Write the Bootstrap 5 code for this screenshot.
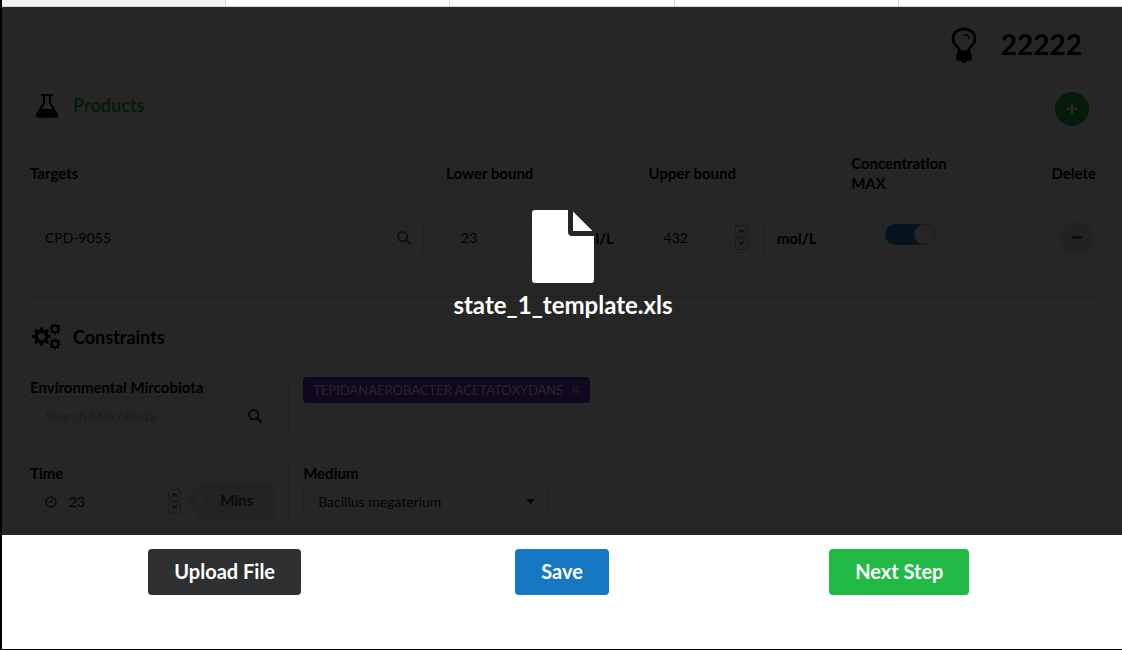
<!DOCTYPE html>
<html lang="en">
<head>
<meta charset="utf-8">
<meta name="viewport" content="width=device-width, initial-scale=1">
<title>Products and constraints</title>
<link href="https://cdn.jsdelivr.net/npm/bootstrap@5.3.0/dist/css/bootstrap.min.css" rel="stylesheet">
<style>
  body { font-family: Lato, "Liberation Sans", sans-serif; font-size: 14px; line-height: 20px; color: #000; background: #fff; }
  svg { display: block; flex: none; }
  .frame { border-left: 2px solid #000; border-bottom: 1px solid #000; }
  .steps { height: 7px; border-bottom: 1px solid #d4d4d5; }
  .steps > * { border-right: 1px solid #d4d4d5; }
  .steps > :first-child { background: #f3f4f5; }
  .steps > :last-child { border-right: 0; }
  .panel { padding: 16px 26px 14px 28px; }
  .score { font-size: 28px; line-height: 40px; font-weight: 700; gap: 24px; padding-right: 14px; }
  .section-title { font-size: 18px; line-height: 24px; font-weight: 700; margin: 0; }
  .product-head { margin: 27px 0 17px; }
  .product-head .section-title { padding-bottom: 8px; }
  .glyph-slot { width: 43px; flex: none; }
  .product-head .glyph-slot { padding-bottom: 6px; }
  .green-text { color: #21ba45; }
  .caption { font-size: 15px; font-weight: 700; line-height: 20px; }
  .round-btn { border: 0; padding: 0; border-radius: 50%; display: flex; align-items: center; justify-content: center; }
  .round-add { width: 34px; height: 34px; background: #21ba45; color: #fff; margin-right: 7px; }
  .round-del { width: 32px; height: 32px; background: #e0e1e2; color: #5a5b5c; margin-right: 3px; }
  .targets { table-layout: fixed; width: 100%; }
  .targets th { padding: 10px 11px 13px; height: 64px; vertical-align: middle; border-bottom: 1px solid #dedfdf; }
  .targets td { padding: 11px; vertical-align: middle; }
  .targets tr > :first-child { padding-left: 0; }
  .targets tr > :last-child { padding-right: 0; }
  .field { height: 38px; border: 1px solid #dedfdf; border-radius: 4px; padding: 0 12px 0 14px; gap: 12px; }
  .field input { border: 0; background: none; outline: 0; padding: 0; color: #000; min-width: 0; width: 100%; appearance: textfield; -moz-appearance: textfield; }
  .field input::-webkit-inner-spin-button { appearance: none; }
  .field input::placeholder { color: #c0c0c0; }
  .bound { width: 181px; padding-right: 0; gap: 16px; }
  .unit { width: 65px; border-left: 1px solid #dedfdf; flex: none; }
  .toggle { padding: 0; min-height: 0; margin-left: 34px; line-height: 0; padding-bottom: 4px; }
  .toggle .form-check-input { width: 50px; height: 21px; margin: 0; float: none; border: 0; background: #2185d0; position: relative; }
  .toggle .form-check-input::after { content: ""; position: absolute; right: 0; top: 0; width: 21px; height: 21px; border-radius: 50%; background: #fff; border: 1px solid #d4d4d5; }
  .side { width: 23%; flex: none; }
  .line-v { width: 1px; background: #dedfdf; margin: 0 14px 0 13px; }
  .line-h { height: 1px; background: #d4d4d5; }
  .block-gap { margin-top: 28px; }
  .constraint-head { margin: 26px 0; }
  .chip { background: #6435c9; color: #fff; border-radius: 4px; font-size: 13px; height: 26px; padding: 0 10px; gap: 8px; }
  .chip button { border: 0; background: none; padding: 0; color: #fff; opacity: .5; }
  .tag-unit { width: 90px; flex: none; height: 38px; padding: 0 0 4px 35px; background: #e8e8e8; color: #444; border-radius: 0 4px 4px 0; clip-path: polygon(15px 0, 100% 0, 100% 100%, 15px 100%, 0 50%); }
  .tag-hole { left: 10px; top: 14px; width: 8px; height: 8px; border-radius: 50%; background: #fff; }
  .medium { appearance: none; width: 100%; background: none; color: #222; }
  .medium-wrap select { border: 0; outline: 0; padding: 0; }
  .dimmer { inset: 0; background: rgba(0, 0, 0, .85); z-index: 5; color: #fff; gap: 10px; padding: 0 0 15px 2px; }
  .file-name { font-size: 24px; line-height: 24px; font-weight: 700; }
  .actions { padding: 14px 54px 54px; }
  .action { border: 0; border-radius: 4px; height: 46px; padding: 0 26px 2px; font-size: 20px; font-weight: 700; color: #fff; }
  .action-dark { background: #2f3032; }
  .action-blue { background: #1678c2; }
  .action-green { background: #21ba45; }
</style>
</head>
<body>
<svg class="d-none" aria-hidden="true">
  <symbol id="search" viewBox="0 0 14 14"><circle cx="5.7" cy="5.7" r="4.6" fill="none" stroke="currentColor" stroke-width="2"/><path d="M9.2 9.2l3.6 3.6" stroke="currentColor" stroke-width="2.4" stroke-linecap="round"/></symbol>
  <symbol id="spin" viewBox="0 0 13 26"><g fill="none" stroke="currentColor"><rect x=".5" y=".5" width="12" height="11" rx="2.5" opacity=".5"/><rect x=".5" y="13.5" width="12" height="11" rx="2.5" opacity=".5"/><path d="M3.8 7.5l2.7-2.7 2.7 2.7M3.8 16.5l2.7 2.7 2.7-2.7" stroke-width="1.5"/></g></symbol>
  <symbol id="cog" viewBox="0 0 20 20"><g fill="none" stroke="currentColor"><circle cx="10" cy="10" r="5.7" stroke-width="3.8"/><circle cx="10" cy="10" r="8.3" stroke-width="2.8" pathLength="16" stroke-dasharray="1 1" stroke-dashoffset=".5"/></g></symbol>
</svg>
<div class="frame d-flex flex-column min-vh-100">
  <div class="steps d-flex">
    <div class="flex-fill"></div><div class="flex-fill"></div><div class="flex-fill"></div><div class="flex-fill"></div><div class="flex-fill"></div>
  </div>

  <main class="position-relative">
    <div class="panel">
      <div class="score d-flex justify-content-end align-items-center">
        <svg class="mt-1" width="26" height="38" viewBox="0 0 26 38"><path d="M9 25c0-5-7-7-7-13C2 5.500 7 2 13 2s11 3.500 11 10c0 6-7 8-7 13z" fill="none" stroke="currentColor" stroke-width="2.800"/><path d="M13 7.500c3 0 5 1.300 5 4" fill="none" stroke="currentColor" stroke-width="1.500" stroke-linecap="round"/><path d="M7 24h12a1.500 1.500 0 0 1 .5 2.500 1.500 1.500 0 0 1 0 3 1.500 1.500 0 0 1-1 4H16.500c-1 3.500-6 3.500-7 0H7.500a1.500 1.500 0 0 1-1-4 1.500 1.500 0 0 1 0-3A1.500 1.500 0 0 1 7 24z" fill="currentColor"/></svg>
        <span>22222</span>
      </div>
      <div class="product-head d-flex align-items-center justify-content-between">
        <div class="d-flex align-items-center">
          <span class="glyph-slot"><svg class="ms-1" width="26" height="24" viewBox="0 0 26 24"><path d="M8 1.200h10" stroke="currentColor" stroke-width="2.200" stroke-linecap="round"/><path d="M10 2v7L3 20.500C2 22 3 22.800 4 22.800h18c1 0 2-.8 1-2.300L16 9V2" fill="none" stroke="currentColor" stroke-width="2"/><path d="M7.500 15h11l4.500 7.500H3z" fill="currentColor"/></svg></span>
          <h2 class="section-title green-text">Products</h2>
        </div>
        <button type="button" class="round-btn round-add" aria-label="Add product"><svg width="12" height="12" viewBox="0 0 12 12"><path d="M6 1v10M1 6h10" stroke="currentColor" stroke-width="2.600"/></svg></button>
      </div>

      <table class="targets">
        <colgroup><col style="width:38%"><col style="width:19%"><col style="width:19%"><col style="width:15%"><col style="width:9%"></colgroup>
        <thead><tr class="caption"><th>Targets</th><th>Lower bound</th><th>Upper bound</th><th>Concentration<br>MAX</th><th class="text-end">Delete</th></tr></thead>
        <tbody><tr>
          <td><div class="field d-flex align-items-center"><input type="text" value="CPD-9055" aria-label="Target"><svg width="14" height="14" opacity=".6"><use href="#search"/></svg></div></td>
          <td><div class="field bound d-flex align-items-center"><input type="number" value="23" aria-label="Lower bound"><svg width="13" height="26" opacity=".7"><use href="#spin"/></svg><span class="unit caption h-100 d-flex align-items-center justify-content-center">mol/L</span></div></td>
          <td><div class="field bound d-flex align-items-center"><input type="number" value="432" aria-label="Upper bound"><svg width="13" height="26" opacity=".7"><use href="#spin"/></svg><span class="unit caption h-100 d-flex align-items-center justify-content-center">mol/L</span></div></td>
          <td><div class="toggle form-check form-switch"><input class="form-check-input" type="checkbox" role="switch" checked aria-label="Concentration MAX"></div></td>
          <td><div class="d-flex justify-content-end"><button type="button" class="round-btn round-del" aria-label="Delete target"><svg width="10" height="4" viewBox="0 0 10 4"><rect width="10" height="3" rx="1" fill="currentColor"/></svg></button></div></td>
        </tr></tbody>
      </table>

      <div class="line-h block-gap"></div>

      <div class="constraint-head d-flex align-items-center">
        <span class="glyph-slot"><svg width="32" height="28" viewBox="0 0 32 28"><use href="#cog" x="2" y="4" width="19" height="19"/><use href="#cog" x="19" y="0" width="12" height="12"/><use href="#cog" x="19" y="15" width="12" height="12"/></svg></span>
        <h2 class="section-title">Constraints</h2>
      </div>

      <div class="d-flex">
        <div class="side">
          <label class="caption d-block" for="microbiota">Environmental Mircobiota</label>
          <div class="field d-flex align-items-center"><input id="microbiota" type="text" placeholder="Search Mircobiota..."><svg width="14" height="14" opacity=".8"><use href="#search"/></svg></div>
        </div>
        <div class="line-v"></div>
        <div><span class="chip d-flex align-items-center">TEPIDANAEROBACTER ACETATOXYDANS <button type="button" aria-label="Remove"><svg width="9" height="9" viewBox="0 0 9 9"><path d="M1 1l7 7M8 1l-7 7" stroke="currentColor" stroke-width="2.600"/></svg></button></span></div>
      </div>

      <div class="d-flex block-gap">
        <div class="side">
          <label class="caption d-block" for="time">Time</label>
          <div class="d-flex">
            <div class="field d-flex align-items-center flex-fill border-end-0 rounded-end-0 pe-0"><svg width="12" height="12" viewBox="0 0 12 12" opacity=".7"><circle cx="6" cy="6" r="5" fill="none" stroke="currentColor" stroke-width="1.500"/><path d="M6.500 3v3.500H4" fill="none" stroke="currentColor"/></svg><input id="time" type="number" value="23"><svg class="me-1" width="13" height="26" opacity=".7"><use href="#spin"/></svg></div>
            <span class="tag-unit caption position-relative d-flex align-items-center"><i class="tag-hole position-absolute"></i>Mins</span>
          </div>
        </div>
        <div class="line-v"></div>
        <div class="side">
          <label class="caption d-block" for="medium">Medium</label>
          <div class="field medium-wrap d-flex align-items-center"><select id="medium" class="medium"><option>Bacillus megaterium</option></select><svg width="9" height="5" viewBox="0 0 9 5"><path d="M0 0h9L4.500 5z" fill="#333"/></svg></div>
        </div>
      </div>
    </div>

    <div class="dimmer position-absolute d-flex flex-column align-items-center justify-content-center">
      <svg width="62" height="73" viewBox="0 0 62 73"><path d="M3 0h33v22a4 4 0 0 0 4 4h22v44a3 3 0 0 1-3 3H3a3 3 0 0 1-3-3V3a3 3 0 0 1 3-3z" fill="#fff"/><path d="M41 1.500L60.500 21H41z" fill="#fff"/></svg>
      <div class="file-name">state_1_template.xls</div>
    </div>
  </main>

  <div class="actions row g-0 text-center">
    <div class="col"><button type="button" class="action action-dark">Upload File</button></div>
    <div class="col"><button type="button" class="action action-blue">Save</button></div>
    <div class="col"><button type="button" class="action action-green">Next Step</button></div>
  </div>
</div>
<script src="https://cdn.jsdelivr.net/npm/bootstrap@5.3.0/dist/js/bootstrap.bundle.min.js"></script>
</body>
</html>
